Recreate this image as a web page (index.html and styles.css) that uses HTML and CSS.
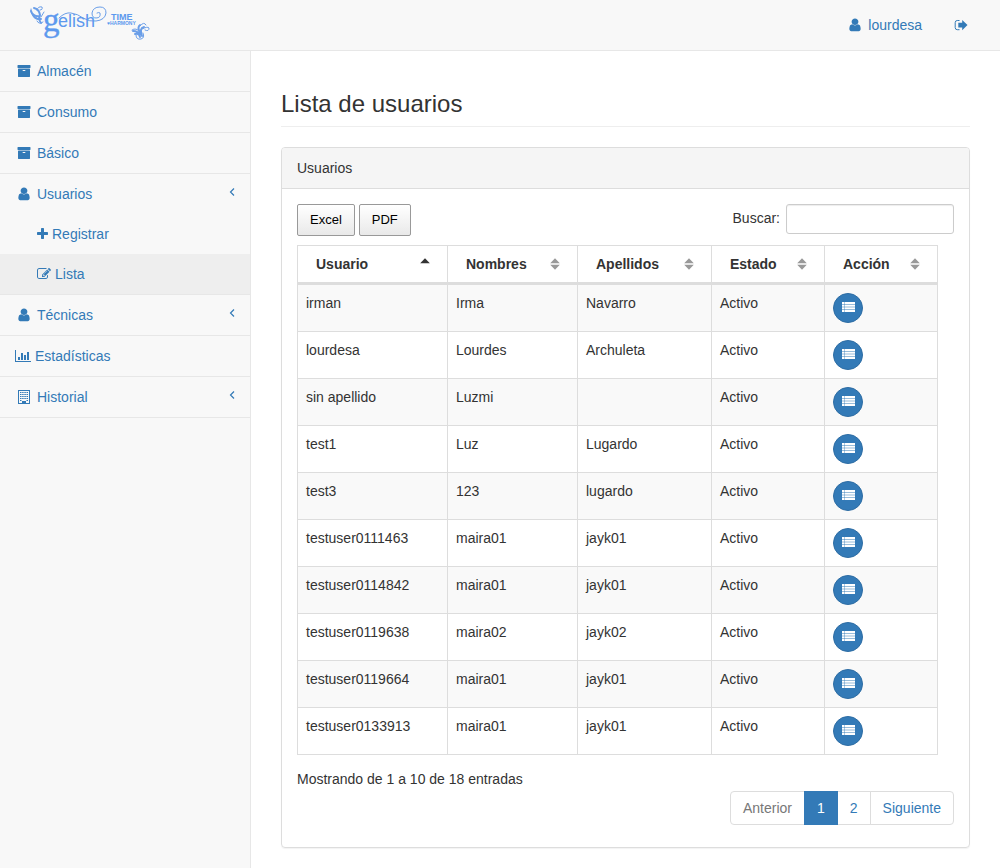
FILE: index.html
```html
<!DOCTYPE html>
<html lang="es">
<head>
<meta charset="utf-8">
<meta name="viewport" content="width=device-width, initial-scale=1">
<title>Lista de usuarios</title>
<link rel="stylesheet" href="styles.css">
</head>
<body>
<svg class="sprite" aria-hidden="true">
  <symbol id="user" viewBox="0 0 1792 1792"><path transform="translate(28 -60) scale(1.13 1.05)" d="M1408 1399q0 109-62.500 187t-150.500 78h-854q-88 0-150.500-78t-62.500-187q0-85 8.500-160.500t31.500-152 58.500-131 94-89 134.500-34.500q131 128 313 128t313-128q76 0 134.500 34.500t94 89 58.500 131 31.500 152 8.500 160.500zm-256-887q0 159-112.500 271.500t-271.500 112.500-271.500-112.500-112.500-271.500 112.500-271.500 271.500-112.500 271.500 112.500 112.500 271.500z"/></symbol>
  <symbol id="archive" viewBox="0 0 1792 1792"><path d="M1088 832q0-26-19-45t-45-19h-256q-26 0-45 19t-19 45 19 45 45 19h256q26 0 45-19t19-45zm576-192v960q0 26-19 45t-45 19h-1408q-26 0-45-19t-19-45v-960q0-26 19-45t45-19h1408q26 0 45 19t19 45zm64-448v256q0 26-19 45t-45 19h-1536q-26 0-45-19t-19-45v-256q0-26 19-45t45-19h1536q26 0 45 19t19 45z"/></symbol>
  <symbol id="plus" viewBox="192 0 1408 1792"><path d="M1600 736v192q0 40-28 68t-68 28h-416v416q0 40-28 68t-68 28h-192q-40 0-68-28t-28-68v-416h-416q-40 0-68-28t-28-68v-192q0-40 28-68t68-28h416v-416q0-40 28-68t68-28h192q40 0 68 28t28 68v416h416q40 0 68 28t28 68z"/></symbol>
  <symbol id="edit" viewBox="0 0 1792 1792"><path d="M888 1184l116-116-152-152-116 116v56h96v96h56zm440-720q-16-16-33 1l-350 350q-17 17-1 33t33-1l350-350q17-17 1-33zm80 594v190q0 119-84.500 203.500t-203.500 84.500h-832q-119 0-203.500-84.500t-84.500-203.500v-832q0-119 84.500-203.500t203.500-84.500h832q63 0 117 25 15 7 18 23 3 17-9 29l-49 49q-14 14-32 8-23-6-45-6h-832q-66 0-113 47t-47 113v832q0 66 47 113t113 47h832q66 0 113-47t47-113v-126q0-13 9-22l64-64q15-15 35-7t20 29zm-96-738l288 288-672 672h-288v-288zm444 132l-92 92-288-288 92-92q28-28 68-28t68 28l152 152q28 28 28 68t-28 68z"/></symbol>
  <symbol id="logout" viewBox="0 0 14 14"><path d="M5.500 2.500H3.300Q1.200 2.500 1.200 4.600v5Q1.200 11.700 3.300 11.700h2.200" fill="none" stroke="currentColor"/><path d="M8.200 2l5.300 5.100-5.300 5.100V9.400H4.300V4.800h3.900z"/></symbol>
  <symbol id="chart" viewBox="0 0 16 14"><path d="M0 1h1v11h15v1H0zM3 8h2v3H3zM6 4h2v7H6zM9 6h2v5H9zM12 3h2v8h-2z"/></symbol>
  <symbol id="building" viewBox="0 0 14 14"><path fill-rule="evenodd" d="M1 0h12v14H1zM2 1v12h3v-2h4v2h3V1z"/><path d="M3 2.500h8M3 4.500h8M3 6.500h8M3 8.500h8M3 10.500h1.500M9.500 10.500H11" stroke="currentColor" stroke-dasharray="1.500 .67"/><path d="M6 11h2v2H6z"/></symbol>
  <symbol id="angle" viewBox="0 0 6 10"><path d="M5 1.500L1.500 5 5 8.500" fill="none" stroke="currentColor" stroke-width="1.200"/></symbol>
  <symbol id="list" viewBox="0 0 13 10"><path d="M0 0h2v2.200H0zM2.400 0H13v2.200H2.400zM0 2.700h2v2H0zM2.400 2.700H13v2H2.400zM0 5.300h2v2H0zM2.400 5.300H13v2H2.400zM0 7.800h2V10H0zM2.400 7.800H13V10H2.400z"/></symbol>
  <symbol id="sort" viewBox="0 0 10 12"><path d="M.2 5.300L5 .3l4.800 5zM.2 6.700h9.600l-4.800 5z"/></symbol>
  <symbol id="asc" viewBox="0 0 10 12"><path d="M.2 5.300L5 .3l4.800 5z"/></symbol>
</svg>

<header class="navbar">
  <a class="brand" href="#" aria-label="Gelish Time Harmony">
    <svg width="122" height="50" viewBox="0 -4 122 50">
      <g fill="none" stroke="#6a9ee8" stroke-linecap="round">
        <path stroke-width="2" d="M2 7q2 6 9 5M4 11q2 5 8 4M5 4q5 1 6 7M11 11q-2 4 1 8"/>
        <path d="M2 5q-1 7 6 9M8 6q1-4 5-3 1 3-2 3M8 17q2 4 6 1M12 13l3-5"/>
        <path d="M30 14q6-6 12-5 7 1 12 5 7 4 13 3 9-1 10-8 0-6-6-6-7 0-8 6 0 5 4 5 5 0 4-5-1-1-3 0"/>
        <path stroke-width="2" d="M104 27q5 0 7 4M106 30q4-1 5 3M111 21q-3 2 0 8M115 23q-5 1-2 9"/>
        <path d="M103 26q4-3 8 2M111 22q4-5 6-1M113 25q6-3 7-1 0 4-4 2M107 31q0 5 5 4 4-1 2-6"/>
      </g>
      <g fill="#5d99ee" font-family="'Liberation Sans', Arial, sans-serif">
        <text x="14" y="27" font-size="33" font-family="'Liberation Serif', serif" stroke="#5d99ee" stroke-width=".4">g</text>
        <text x="29" y="23" font-size="18">elish</text>
        <text x="82" y="16" font-size="9" font-weight="bold">TIME</text>
        <text x="78" y="21" font-size="5" font-weight="bold">♥HARMONY</text>
      </g>
    </svg>
  </a>
  <nav class="top-links" aria-label="Cuenta">
    <a href="#"><svg class="icon"><use href="#user"/></svg>lourdesa</a>
    <a href="#" aria-label="Salir"><svg class="icon"><use href="#logout"/></svg></a>
  </nav>
</header>

<div class="layout">
  <nav class="sidebar" aria-label="Menú">
    <ul class="menu">
      <li><a href="#"><svg class="icon"><use href="#archive"/></svg>Almacén</a></li>
      <li><a href="#"><svg class="icon"><use href="#archive"/></svg>Consumo</a></li>
      <li><a href="#"><svg class="icon"><use href="#archive"/></svg>Básico</a></li>
      <li>
        <a href="#"><svg class="icon"><use href="#user"/></svg>Usuarios<svg class="arrow"><use href="#angle"/></svg></a>
        <ul class="submenu">
          <li><a href="#"><svg class="icon plus"><use href="#plus"/></svg>Registrar</a></li>
          <li><a class="active" href="#"><svg class="icon edit"><use href="#edit"/></svg>Lista</a></li>
        </ul>
      </li>
      <li><a href="#"><svg class="icon"><use href="#user"/></svg>Técnicas<svg class="arrow"><use href="#angle"/></svg></a></li>
      <li><a href="#"><svg class="icon chart"><use href="#chart"/></svg>Estadísticas</a></li>
      <li><a href="#"><svg class="icon"><use href="#building"/></svg>Historial<svg class="arrow"><use href="#angle"/></svg></a></li>
    </ul>
  </nav>

  <main class="content">
    <h1>Lista de usuarios</h1>
    <section class="panel">
      <h2 class="panel-heading">Usuarios</h2>
      <div class="panel-body">
        <div class="toolbar">
          <div class="exports">
            <button type="button">Excel</button>
            <button type="button">PDF</button>
          </div>
          <div class="search">
            <label for="search">Buscar:</label>
            <input id="search" type="search">
          </div>
        </div>
        <div class="table-wrap">
          <table>
            <colgroup><col class="c-user"><col class="c-name"><col class="c-last"><col class="c-state"><col class="c-action"></colgroup>
            <thead>
              <tr>
                <th scope="col" aria-sort="ascending"><div class="head sorted">Usuario<svg><use href="#asc"/></svg></div></th>
                <th scope="col"><div class="head">Nombres<svg><use href="#sort"/></svg></div></th>
                <th scope="col"><div class="head">Apellidos<svg><use href="#sort"/></svg></div></th>
                <th scope="col"><div class="head">Estado<svg><use href="#sort"/></svg></div></th>
                <th scope="col"><div class="head">Acción<svg><use href="#sort"/></svg></div></th>
              </tr>
            </thead>
            <tbody>
              <tr><td>irman</td><td>Irma</td><td>Navarro</td><td>Activo</td><td><button class="round" type="button" aria-label="Detalle"><svg><use href="#list"/></svg></button></td></tr>
              <tr><td>lourdesa</td><td>Lourdes</td><td>Archuleta</td><td>Activo</td><td><button class="round" type="button" aria-label="Detalle"><svg><use href="#list"/></svg></button></td></tr>
              <tr><td>sin apellido</td><td>Luzmi</td><td></td><td>Activo</td><td><button class="round" type="button" aria-label="Detalle"><svg><use href="#list"/></svg></button></td></tr>
              <tr><td>test1</td><td>Luz</td><td>Lugardo</td><td>Activo</td><td><button class="round" type="button" aria-label="Detalle"><svg><use href="#list"/></svg></button></td></tr>
              <tr><td>test3</td><td>123</td><td>lugardo</td><td>Activo</td><td><button class="round" type="button" aria-label="Detalle"><svg><use href="#list"/></svg></button></td></tr>
              <tr><td>testuser0111463</td><td>maira01</td><td>jayk01</td><td>Activo</td><td><button class="round" type="button" aria-label="Detalle"><svg><use href="#list"/></svg></button></td></tr>
              <tr><td>testuser0114842</td><td>maira01</td><td>jayk01</td><td>Activo</td><td><button class="round" type="button" aria-label="Detalle"><svg><use href="#list"/></svg></button></td></tr>
              <tr><td>testuser0119638</td><td>maira02</td><td>jayk02</td><td>Activo</td><td><button class="round" type="button" aria-label="Detalle"><svg><use href="#list"/></svg></button></td></tr>
              <tr><td>testuser0119664</td><td>maira01</td><td>jayk01</td><td>Activo</td><td><button class="round" type="button" aria-label="Detalle"><svg><use href="#list"/></svg></button></td></tr>
              <tr><td>testuser0133913</td><td>maira01</td><td>jayk01</td><td>Activo</td><td><button class="round" type="button" aria-label="Detalle"><svg><use href="#list"/></svg></button></td></tr>
            </tbody>
          </table>
        </div>
        <p class="info">Mostrando de 1 a 10 de 18 entradas</p>
        <nav class="pagination" aria-label="Páginas">
          <a class="disabled" href="#">Anterior</a>
          <a class="current" href="#" aria-current="page">1</a>
          <a href="#">2</a>
          <a href="#">Siguiente</a>
        </nav>
      </div>
    </section>
  </main>
</div>
</body>
</html>
```
FILE: styles.css
```css
* { box-sizing: border-box; }

body {
  margin: 0;
  min-height: 100vh;
  display: flex;
  flex-direction: column;
  background: #f8f8f8;
  color: #333;
  font: 14px/20px "Liberation Sans", Arial, sans-serif;
}

a { color: #337ab7; text-decoration: none; }
ul { margin: 0; padding: 0; list-style: none; }
svg { display: block; fill: currentColor; flex: none; }
.sprite { position: absolute; width: 0; height: 0; }

.icon { width: 18px; height: 14px; }
.icon.plus { width: 11px; }
.icon.edit { width: 14px; }
.icon.chart { width: 16px; }

.navbar {
  display: flex;
  justify-content: space-between;
  height: 51px;
  padding: 0 15px 0 29px;
  border-bottom: 1px solid #e7e7e7;
}
.top-links { display: flex; }
.top-links a { display: flex; align-items: center; gap: 4px; padding: 0 15px; }

.layout { flex: 1; display: flex; }

.sidebar { width: 250px; flex: none; }
.menu > li { border-bottom: 1px solid #e7e7e7; }
.menu a { display: flex; align-items: center; gap: 4px; padding: 10px 15px; }
.menu .submenu a { padding-left: 37px; }
.menu a.active { background: #eee; }
.arrow { width: 6px; height: 10px; margin: 0 0 4px auto; }

.content {
  flex: 1;
  min-width: 0;
  padding: 40px 30px 20px;
  border-left: 1px solid #e7e7e7;
  background: #fff;
}
h1 {
  margin: 0 0 20px;
  padding-bottom: 9px;
  border-bottom: 1px solid #eee;
  font-size: 24px;
  line-height: 26px;
  font-weight: 400;
}

.panel {
  border: 1px solid #ddd;
  border-radius: 4px;
  box-shadow: 0 1px 1px rgba(0, 0, 0, .05);
}
.panel-heading {
  margin: 0;
  padding: 10px 15px;
  border-bottom: 1px solid #ddd;
  border-radius: 3px 3px 0 0;
  background: #f5f5f5;
  font-size: 14px;
  font-weight: 400;
}
.panel-body { padding: 15px 15px 22px; }

.toolbar { display: flex; justify-content: space-between; align-items: flex-start; margin-bottom: 9px; }
.exports { display: flex; gap: 4px; }
.exports button {
  height: 32px;
  padding: 0 12px;
  border: 1px solid #999;
  border-radius: 2px;
  background: linear-gradient(#fff, #e9e9e9);
  color: #000;
  font: 13px/20px "Liberation Sans", Arial, sans-serif;
}
.search { display: flex; align-items: center; gap: 6px; }
.search label { padding-bottom: 2px; }
.search input {
  width: 168px;
  height: 30px;
  padding: 5px 10px;
  border: 1px solid #ccc;
  border-radius: 3px;
  background: #fff;
  box-shadow: inset 0 1px 1px rgba(0, 0, 0, .075);
  font: 12px/18px "Liberation Sans", Arial, sans-serif;
}

.table-wrap { padding-right: 16px; }
table {
  width: 100%;
  table-layout: fixed;
  border-collapse: separate;
  border-spacing: 0;
  border: solid #ddd;
  border-width: 1px 0 0 1px;
}
.c-user { width: 150px; }
.c-name { width: 130px; }
.c-last { width: 134px; }
.c-state, .c-action { width: 113px; }
th, td { padding: 8px; border: solid #ddd; border-width: 0 1px 1px 0; text-align: left; vertical-align: top; }
th { padding: 8px 17px 8px 18px; border-bottom-width: 3px; }
tbody tr:nth-child(odd) { background: #f9f9f9; }

.head { display: flex; align-items: center; justify-content: space-between; }
.head svg { width: 10px; height: 12px; color: #999; }
.head.sorted svg { color: #333; }

.round {
  display: flex;
  align-items: center;
  justify-content: center;
  width: 30px;
  height: 30px;
  padding: 0 0 2px;
  border: 1px solid #2e6da4;
  border-radius: 50%;
  background: #337ab7;
  color: #fff;
}
.round svg { width: 13px; height: 10px; }

.info { margin: 14px 0 2px; }
.pagination { display: flex; justify-content: flex-end; }
.pagination a { padding: 6px 12px; border: 1px solid #ddd; background: #fff; }
.pagination a + a { margin-left: -1px; }
.pagination a:first-child { border-radius: 4px 0 0 4px; }
.pagination a:last-child { border-radius: 0 4px 4px 0; }
.pagination .disabled { color: #777; }
.pagination .current { z-index: 1; border-color: #337ab7; background: #337ab7; color: #fff; }
```
